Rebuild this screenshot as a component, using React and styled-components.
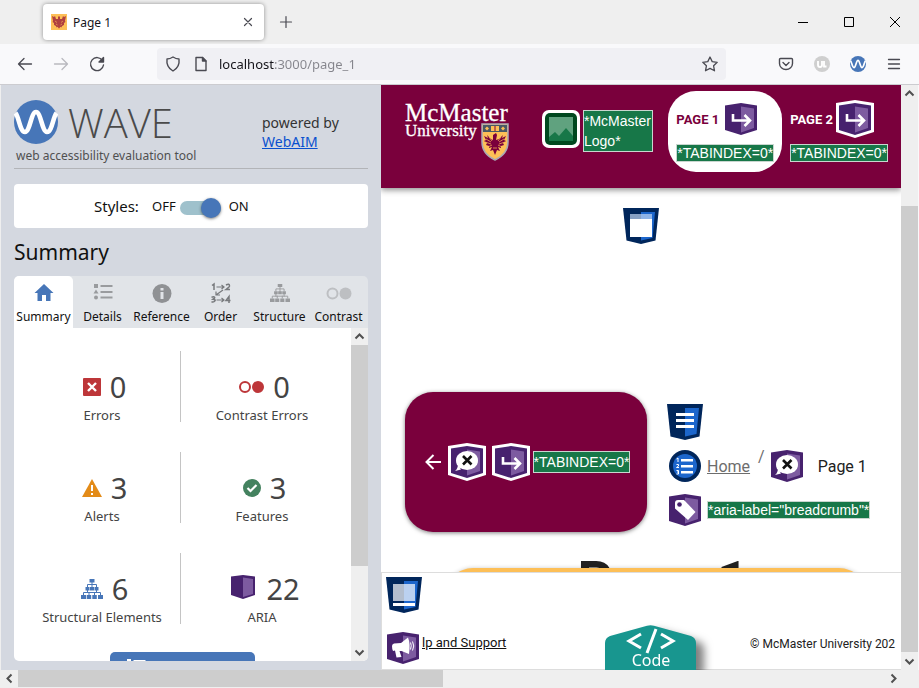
import React, { useState } from "react";
import styled, { createGlobalStyle } from "styled-components";

const GlobalStyle = createGlobalStyle`
  * { box-sizing: border-box; }
  body { margin: 0; background: #efefef; }
  button { border: 0; padding: 0; margin: 0; background: none; color: inherit; font: inherit; cursor: pointer; }
  svg { display: block; flex: none; overflow: visible; }
  h1, h2, p, dl, dd, dt, ol { margin: 0; padding: 0; }
`;

const UI = `"Noto Sans", "Open Sans", sans-serif`;
const MAROON = "#7a003c";

/* ---------- browser chrome ---------- */

const Window = styled.div`
  display: flex;
  flex-direction: column;
  height: 100vh;
  min-height: 480px;
  overflow: hidden;
  font-family: ${UI};
  color: #15141a;
`;

const TitleBar = styled.header`
  flex: none;
  display: flex;
  align-items: center;
  height: 44px;
  padding-left: 43px;
  background: #efefef;
`;

const BrowserTab = styled.div`
  display: flex;
  align-items: center;
  gap: 6px;
  width: 221px;
  height: 36px;
  padding: 0 8px;
  border-radius: 4px;
  background: #fff;
  box-shadow: 0 0 4px rgba(0, 0, 0, 0.4);
  font-size: 12px;
`;

const TabTitle = styled.span`
  flex: 1;
`;

const IconButton = styled.button`
  display: flex;
  align-items: center;
  justify-content: center;
  width: ${(p) => p.$w || 32}px;
  height: ${(p) => p.$h || 32}px;
  color: ${(p) => (p.$muted ? "#b9b9bf" : "#4a4a52")};
`;

const WindowControls = styled.div`
  display: flex;
  margin-left: auto;
  padding-right: 1px;
`;

const Toolbar = styled.nav`
  flex: none;
  display: flex;
  align-items: center;
  justify-content: space-between;
  gap: 44px;
  height: 41px;
  padding: 0 9px;
  background: #f9f9fb;
  border-bottom: 1px solid #ccccd0;
`;

const ButtonGroup = styled.div`
  display: flex;
  gap: 4px;
`;

const UrlBar = styled.div`
  flex: 1;
  display: flex;
  align-items: center;
  height: 32px;
  padding-left: 8px;
  border-radius: 4px;
  background: #f0f0f4;
  color: #4a4a52;
  gap: 12px;
`;

const UrlInput = styled.input`
  flex: 1;
  min-width: 0;
  margin-left: -2px;
  padding: 0;
  border: 0;
  outline: 0;
  font: 13px ${UI};
  color: transparent;
  background: linear-gradient(90deg, #15141a 56px, #85858c 56px);
  -webkit-background-clip: text;
  background-clip: text;
`;

/* ---------- shell ---------- */

const Shell = styled.div`
  flex: 1;
  min-height: 0;
  display: flex;
  border-right: 1px solid #f9f9fb;
`;

const Sidebar = styled.aside`
  flex: none;
  display: flex;
  flex-direction: column;
  width: 381px;
  padding: 0 13px 9px;
  border-left: 1px solid #efefef;
  background: #d4d8e0;
`;

const Frame = styled.div`
  position: relative;
  flex: 1;
  min-width: 0;
  display: flex;
  overflow: hidden;
`;

/* ---------- scroll bars ---------- */

const Scroll = styled.div`
  flex: none;
  display: flex;
  flex-direction: ${(p) => (p.$row ? "row" : "column")};
  ${(p) => (p.$row ? "height: 18px; padding: 0 17px 1px 1px;" : "width: 17px;")}
  background: #efefef;
`;

const ScrollArrow = styled.button`
  flex: none;
  display: flex;
  align-items: center;
  justify-content: center;
  width: 17px;
  height: 17px;
  color: #505050;
`;

const ScrollTrack = styled.div`
  flex: 1;
  display: flex;
  flex-direction: ${(p) => (p.$row ? "row" : "column")};
`;

const ScrollThumb = styled.div`
  flex: 0 0 ${(p) => p.$size}%;
  margin-top: ${(p) => p.$start || 0}px;
  background: #cdcdcd;
`;

/* ---------- WAVE side panel ---------- */

const Brand = styled.div`
  flex: none;
  display: flex;
  justify-content: space-between;
  height: 84px;
  padding-top: 15px;
  border-bottom: 1px solid #b2b4b8;
`;

const BrandLogo = styled.div`
  color: #505050;
`;

const BrandRow = styled.div`
  display: flex;
  align-items: center;
  gap: 10px;
  height: 44px;
`;

const BrandName = styled.span`
  padding-top: 2px;
  font: 300 40px/44px "Open Sans", "Noto Sans", sans-serif;
  color: #4a4a4a;
`;

const Tagline = styled.p`
  padding-left: 2px;
  font-size: 12px;
  line-height: 23px;
`;

const Powered = styled.p`
  width: 106px;
  padding-top: 13px;
  font-size: 14px;
  line-height: 19px;
  color: #333;
  a { display: block; width: max-content; color: #0a50cf; }
`;

const StylesBar = styled.label`
  flex: none;
  display: flex;
  align-items: center;
  height: 44px;
  margin-top: 15px;
  padding-left: 80px;
  border-radius: 4px;
  background: #fff;
  color: #111;
  font-size: 13px;
`;

const StylesName = styled.span`
  width: 58px;
  font-size: 15px;
`;

const Toggle = styled.input`
  appearance: none;
  display: flex;
  align-items: center;
  justify-content: ${(p) => (p.checked ? "flex-end" : "flex-start")};
  width: 41px;
  height: 14px;
  margin: 3px 8px 0 4px;
  border-radius: 7px;
  background: #9fc1cc;
  &::before {
    content: "";
    width: 20px;
    height: 20px;
    border-radius: 50%;
    background: #4776b8;
    box-shadow: 0 1px 3px rgba(0, 0, 0, 0.5);
  }
`;

const PanelTitle = styled.h1`
  flex: none;
  font-size: 21px;
  font-weight: 400;
  line-height: 48px;
  color: #111;
`;

const Tabs = styled.div`
  flex: none;
  display: flex;
  height: 52px;
  border-radius: 5px 5px 0 0;
  background: #e1e4e8;
`;

const TabButton = styled.button`
  flex: 1 1 0;
  min-width: 0;
  display: flex;
  flex-direction: column;
  align-items: center;
  gap: 5px;
  padding-top: 7px;
  border-radius: 5px 5px 0 0;
  background: ${(p) => (p["aria-selected"] ? "#fff" : "transparent")};
  font-size: 12px;
  line-height: 18px;
  white-space: nowrap;
  color: #111;
`;

const Panel = styled.section`
  flex: 1;
  min-height: 0;
  display: flex;
  overflow: hidden;
  border-radius: 0 0 5px 5px;
  background: #fff;
`;

const PanelBody = styled.div`
  flex: 1;
  overflow: hidden;
  padding: 23px 8px 0 10px;
`;

const Stats = styled.dl`
  display: grid;
  grid-template-columns: 157px 1fr;
  row-gap: 30px;
`;

const Stat = styled.div`
  display: flex;
  flex-direction: column-reverse;
  justify-content: flex-start;
  height: 71px;
  text-align: center;
  color: #444;
  border-right: ${(p) => (p.$ruled ? "1px solid #c4c4c4" : "0")};
`;

const StatValue = styled.dd`
  display: flex;
  align-items: center;
  justify-content: center;
  gap: 9px;
  padding: 15px 0 0 5px;
  font-size: 29px;
  line-height: 42px;
`;

const StatName = styled.dt`
  font-size: 13px;
  line-height: 14px;
`;

const DetailsButton = styled.button`
  display: flex;
  align-items: flex-start;
  gap: 10px;
  width: 145px;
  height: 34px;
  margin: 28px 0 0 86px;
  padding: 6px 16px;
  border-radius: 5px;
  background: #4776b8;
  color: #fff;
  font-size: 13px;
  line-height: 22px;
`;

/* ---------- inspected page ---------- */

const Page = styled.div`
  flex: 1;
  min-width: 0;
  display: flex;
  flex-direction: column;
  overflow: hidden;
  background: #fff;
  font-family: Roboto, "Liberation Sans", sans-serif;
`;

const SiteHeader = styled.header`
  position: relative;
  flex: none;
  display: flex;
  height: 103px;
  padding: 0 13px 0 24px;
  background: ${MAROON};
  box-shadow: 0 2px 6px rgba(0, 0, 0, 0.45);
`;

const LogoLink = styled.a`
  margin: 16px 32px 0 0;
`;

const LogoAlt = styled.div`
  display: flex;
  align-items: flex-start;
  gap: 3px;
  margin: 25px auto 0 0;
`;

const Note = styled.span`
  border: 1px solid #c9d6cf;
  background: #177748;
  color: #fff;
  font: 14px/${(p) => (p.$tall || p.$mid ? 20 : 16)}px "Liberation Sans", Arial, sans-serif;
  white-space: ${(p) => (p.$tall ? "normal" : "nowrap")};
  ${(p) => p.$tall && "width: 70px;"}
`;

const SiteNav = styled.nav`
  display: flex;
  padding-top: 6px;
`;

const NavItem = styled.a`
  display: flex;
  flex-direction: column;
  align-items: center;
  height: 81px;
  padding: 9px 8px 0;
  border-radius: 28px;
  background: ${(p) => (p.$current ? "#fff" : "transparent")};
  color: ${(p) => (p.$current ? MAROON : "#fff")};
  margin-right: ${(p) => (p.$current ? 0 : -8)}px;
  text-decoration: none;
  font-size: 13px;
  font-weight: 700;
`;

const NavLabel = styled.span`
  display: flex;
  align-items: center;
  gap: 3px;
  width: 100%;
  height: 38px;
  margin-bottom: 6px;
`;

const SiteMain = styled.main`
  flex: 1;
  min-height: 0;
  overflow: hidden;
  padding: 20px 24px 0;
`;

const MainMarker = styled.div`
  display: flex;
  justify-content: center;
  height: 184px;
`;

const Columns = styled.div`
  display: flex;
  gap: 20px;
`;

const BackCard = styled.a`
  flex: none;
  display: flex;
  align-items: center;
  justify-content: center;
  width: 242px;
  height: 140px;
  padding-left: 3px;
  border-radius: 28px;
  background: ${MAROON};
  box-shadow: 0 1px 4px rgba(0, 0, 0, 0.5);
  text-decoration: none;
`;

const MarkerGap = styled.span`
  display: flex;
  gap: ${(p) => p.$gap}px;
  margin: 0 3px 0 7px;
`;

const Crumbs = styled.nav`
  padding-top: 12px;
  font-size: 16px;
  color: #212121;
`;

const CrumbRow = styled.ol`
  display: flex;
  align-items: center;
  height: 32px;
  margin: 10px 0 12px 2px;
  list-style: none;
  li { display: flex; align-items: center; }
  a { margin-left: 6px; color: #6d6d6d; }
`;

const Slash = styled.li`
  margin: 0 6px 20px 8px;
  color: #6d6d6d;
`;

const CurrentCrumb = styled.span`
  margin-left: 15px;
`;

const LabelRow = styled.div`
  display: flex;
  align-items: center;
  gap: 6px;
  margin-left: 2px;
`;

const Headline = styled.h2`
  margin-top: 20px;
  height: 16px;
  padding-left: 44px;
  font-size: 55px;
  font-weight: 700;
  line-height: 60px;
  text-align: center;
  color: #212121;
`;

const GoldCard = styled.section`
  position: relative;
  height: 120px;
  margin: 0 10px 0 40px;
  border-radius: 28px;
  background: #fdbf57;
  box-shadow: 0 1px 5px rgba(0, 0, 0, 0.3);
`;

const SiteFooter = styled.footer`
  flex: none;
  display: flex;
  justify-content: space-between;
  height: 98px;
  padding: 4px 0 0 4px;
  border: 1px solid #ddd;
  border-right: 0;
  background: #fff;
  font-size: 13px;
  color: #212121;
  overflow: hidden;
`;

const Support = styled.div`
  padding-bottom: 5px;
  display: flex;
  flex-direction: column;
  justify-content: space-between;
  a { display: flex; padding-left: 1px; gap: 3px; color: #111; line-height: 22px; }
`;

const Copyright = styled.p`
  flex: none;
  width: 151px;
  padding-top: 59px;
  font-size: 12px;
  line-height: 16px;
  white-space: nowrap;
`;

const CodeTab = styled.button`
  position: absolute;
  bottom: 0;
  left: 50%;
  width: 91px;
  height: 45px;
  margin-left: -45px;
  color: #fff;
  font: 16px/18px ${UI};
  filter: drop-shadow(8px 6px 4px rgba(0, 0, 0, 0.5));
  svg { position: absolute; inset: 0; }
  span { position: relative; display: block; padding: 25px 0 0 2px; }
`;

/* ---------- drawings ---------- */

const Glyph = ({ size = 16, children, sw = 1, box = 16 }) => (
  <svg width={size} height={size} viewBox={`0 0 ${box} ${box}`} fill="none" stroke="currentColor" strokeWidth={sw} strokeLinecap="round" strokeLinejoin="round">
    {children}
  </svg>
);

const Arrow = ({ dir }) => (
  <svg width="11" height="11" viewBox="0 0 11 11" fill="none" stroke="currentColor" strokeWidth="2">
    <path d={{ up: "M1.5 7.5l4-4 4 4", down: "M1.5 3.5l4 4 4-4", left: "M7.5 1.5l-4 4 4 4", right: "M3.5 1.5l4 4-4 4" }[dir]} />
  </svg>
);

const WaveMark = ({ size }) => (
  <svg width={size} height={size} viewBox="0 0 44 44">
    <circle cx="22" cy="22" r="22" fill="#4776b8" />
    <path d="M1.500 13C5 17 6 32 11 32S17 12 22 12s6 20 11 20 6-15 9.500-19" fill="none" stroke="#fff" strokeWidth="4.600" />
  </svg>
);

const Favicon = () => (
  <svg width="16" height="16" viewBox="0 0 16 16">
    <path fill="#fdbf57" d="M0 0h16v16H0z" />
    <path fill="#b04040" d="M1 2l2 1 1-1 1 3 2 1V3l1-1 1 1v3l2-1 1-3 1 1 2-1-1 5 .5 1-1.500 1v2l-2 .5-.5 2L9 12l-1 3-1-3-1.500 1.500-.5-2L3 11V9L1.500 8 2 7z" />
    <path fill="#b04040" d="M3.500 5h9v6l-4.500 3-4.500-3z" />
    <path stroke="#fdbf57" strokeWidth=".6" d="M4 7l2 1.500M12 7l-2 1.500M5 10l1.500 1M11 10l-1.500 1" />
  </svg>
);

const StructureIcon = ({ color, size = 22 }) => (
  <svg width={size} height={size} viewBox="0 0 22 22" fill={color}>
    <path d="M8.500 1h5v3.500h-5zM4.500 9h4v3.500h-4zM9 9h4v3.500H9zM13.500 9h4v3.500h-4zM0 17h5v4H0zM5.700 17h4.500v4H5.700zM11.300 17h4.500v4h-4.500zM17 17h5v4h-5z" />
    <path fill="none" stroke={color} d="M11 4v6M6.500 9V6.500h9V9M2.500 17v-2.500h17V17M6.500 12v3M8 14v3M13.500 14v3M15.500 12v3" />
  </svg>
);

const tabIcons = {
  Summary: (
    <svg width="20" height="20" viewBox="0 0 20 20" fill="#4776b8">
      <path d="M10 1l9.500 9h-3v8h-4.500v-6H8v6H3.500v-8h-3z" />
    </svg>
  ),
  Details: (
    <svg width="20" height="20" viewBox="0 0 20 20" fill="#999b9e">
      <path d="M1 1h4v4H1zM3 6.500l2.500 4H.5z" />
      <circle cx="3" cy="14.500" r="2" />
      <path d="M7.500 2h12v2h-12zM7.500 8h12v2h-12zM7.500 13.500h12v2h-12z" />
    </svg>
  ),
  Reference: (
    <svg width="20" height="20" viewBox="0 0 20 20">
      <circle cx="10" cy="10.500" r="9.500" fill="#8f9194" />
      <path d="M8.500 5h3v2.500h-3zM8.500 9h3v7h-3z" fill="#e1e4e8" />
    </svg>
  ),
  Order: (
    <svg width="20" height="20" viewBox="0 0 20 20" fill="none" stroke="#77797c" strokeWidth="1.200">
      <path d="M5.500 4h7M10.500 2l2.500 2-2.500 2M12 7l-7 5M5 8.500V12h4M5.500 17h7M10.500 15l2.500 2-2.500 2" />
      <path strokeWidth="1.500" d="M1 2.500L3 1v6M15 2q3.500-2 3.500 1 0 1-3.500 3.500h4M.5 14.200q4-1 3 1l-1.500 1q4 .5 1 2.500-1 .5-2.500 0M18 20v-6.500l-3 4h4.500" />
    </svg>
  ),
  Structure: <StructureIcon color="#999b9e" size={20} />,
  Contrast: (
    <svg width="26" height="20" viewBox="0 0 26 20">
      <circle cx="6.500" cy="10.500" r="5" fill="none" stroke="#bdbfc2" strokeWidth="2" />
      <circle cx="19.500" cy="10.500" r="6" fill="#bdbfc2" />
    </svg>
  ),
};

const AriaShape = ({ outlined, size = 32, children }) => {
  const s = outlined ? 38 : size;
  return (
    <svg width={s} height={s} viewBox={outlined ? "-3 -3 38 38" : "0 0 32 32"}>
      {outlined && <path fill="#fff" d="M-3 0L16-3 35 0v29l-19 6-19-6z" />}
      <path fill="#47226e" d="M0 2.500L16 0l16 2.500V27l-16 5-16-5z" />
      <path fill="#7d5ba0" d="M16 3.500l13 2V25l-13 4.500z" />
      {children}
    </svg>
  );
};
const TabIndexIcon = (p) => (
  <AriaShape {...p}>
    <path d="M8 11v6.500h17M19.500 12l5.500 5.500-5.500 5.500" fill="none" stroke="#fff" strokeWidth="2.600" />
  </AriaShape>
);
const HiddenIcon = (p) => (
  <AriaShape {...p}>
    <ellipse cx="16" cy="14.500" rx="11" ry="9.500" fill="#fff" />
    <path d="M7 18l3 5.500-6 1.500q3-2.500 3-7z" fill="#fff" />
    <path d="M12 10l8.500 8.500M20.500 10L12 18.500" stroke="#111" strokeWidth="2.600" />
  </AriaShape>
);
const LabelIcon = () => (
  <AriaShape>
    <path d="M6 9q0-3 3-3h6l11.500 12-7.500 8L6 14.500z" fill="#fff" strokeLinejoin="round" />
    <circle cx="10.500" cy="10.500" r="2.300" fill="#47226e" />
  </AriaShape>
);
const AlertIcon = () => (
  <AriaShape>
    <path d="M5 14q0-2 2-2.500l7-.5 7-5.500q2.500 6 1 16.500l-7.500-3h-2l2 6-5 .5L8 18.500l-2 .5q-1-2-1-5z" fill="#fff" />
    <path d="M23.500 10.500q1.500 3 0 7M25.500 9.500q2.500 4.500 0 9" fill="none" stroke="#fff" />
  </AriaShape>
);

const HtmlShape = ({ children }) => (
  <svg width="36" height="36" viewBox="0 0 36 36">
    <path fill="#00265b" d="M0 0h36l-3.500 32.500L18 36 3.500 32.500z" />
    <path fill="#1c66cc" d="M18 4h14l-2.500 26L18 32.500z" />
    {children}
  </svg>
);

const StatIcon = {
  error: (
    <svg width="18" height="18" viewBox="0 0 18 18">
      <rect width="18" height="18" rx="1" fill="#bd3639" />
      <path d="M5 5l8 8M13 5l-8 8" stroke="#fff" strokeWidth="2.400" />
    </svg>
  ),
  contrast: (
    <svg width="25" height="18" viewBox="0 0 25 18">
      <circle cx="6" cy="9" r="5" fill="none" stroke="#bd3639" strokeWidth="2" />
      <circle cx="19" cy="9" r="6" fill="#bd3639" />
    </svg>
  ),
  alert: (
    <svg width="20" height="18" viewBox="0 0 20 18">
      <path d="M10 0l10 18H0z" fill="#e38b18" />
      <path d="M9 6h2v6H9zM9 14h2v2H9z" fill="#fff" />
    </svg>
  ),
  feature: (
    <svg width="18" height="18" viewBox="0 0 18 18">
      <circle cx="9" cy="9" r="9" fill="#44825f" />
      <path d="M4.500 9l3 3 6-6" stroke="#fff" strokeWidth="2.200" fill="none" />
    </svg>
  ),
  structure: <StructureIcon color="#4776b8" />,
  aria: (
    <svg width="28" height="28" viewBox="0 0 28 28">
      <path fill="#47226e" d="M2 1.500L14 0l12 1.500V20l-12 4-12-4z" />
      <path fill="#7d5ba0" d="M14 2.500L24 4v15l-10 3z" />
    </svg>
  ),
};

const McMasterLogo = () => (
  <svg width="105" height="60" viewBox="0 0 105 60" role="img" aria-label="McMaster University">
    <g fill="#fff" stroke="#fff" strokeWidth=".3" fontFamily="Liberation Serif, Times New Roman, serif">
      <text x="0" y="20" fontSize="25">McMaster</text>
      <text x="0" y="35" fontSize="17">University</text>
    </g>
    <path d="M77 23h26v18q0 12-13 18-13-6-13-18z" fill="#fdbf57" stroke="#a9a9b4" strokeWidth="1.500" />
    <path d="M78 24h24v7H78z" fill="#495965" />
    <path d="M86 25h8v5h-8zM82 25.500l2 2-2 2-2-2zM98 25.500l2 2-2 2-2-2z" fill="#fdbf57" />
    <path d="M90 25v5" stroke="#7a003c" />
    <path fill="#7a003c" d="M79 35l4 2-1-3 4 4 2 1v-5l3-2 1 2-1 5 3-1 4-4-1 3 4-2-2 4 2 1-3 2 1 2-3 1v2l-3-1 2 4-3-1-2 5-2-5-3 1 2-4-3 1v-2l-3-1 1-2-3-2 2-1z" />
    <path stroke="#fdbf57" strokeWidth=".7" d="M81 38l5 3M80 41l6 2M99 38l-5 3M100 41l-6 2M84 36l3 4M96 36l-3 4M88 47h4M87 44l-4 2M93 44l4 2" />
  </svg>
);

const ImageIcon = () => (
  <svg width="38" height="38" viewBox="0 0 38 38">
    <rect width="38" height="38" rx="7" fill="#fff" />
    <rect x="3" y="3" width="32" height="32" rx="5" fill="#00481f" />
    <path fill="#60a27f" d="M7 7h24v24H7z" />
    <path fill="#177748" d="M7 27l6-5 4 4 7-8 7 8v5H7z" />
  </svg>
);

/* ---------- data ---------- */

const stats = [
  ["Errors", 0, "error"],
  ["Contrast Errors", 0, "contrast"],
  ["Alerts", 3, "alert"],
  ["Features", 3, "feature"],
  ["Structural Elements", 6, "structure"],
  ["ARIA", 22, "aria"],
];

function ScrollBar({ row, size, start }) {
  return (
    <Scroll $row={row}>
      <ScrollArrow aria-label={row ? "Scroll left" : "Scroll up"}><Arrow dir={row ? "left" : "up"} /></ScrollArrow>
      <ScrollTrack $row={row}><ScrollThumb $size={size} $start={start} /></ScrollTrack>
      <ScrollArrow aria-label={row ? "Scroll right" : "Scroll down"}><Arrow dir={row ? "right" : "down"} /></ScrollArrow>
    </Scroll>
  );
}

function Chrome() {
  const [url, setUrl] = useState("localhost:3000/page_1");
  return (
    <>
      <TitleBar>
        <BrowserTab>
          <Favicon />
          <TabTitle>Page 1</TabTitle>
          <IconButton $w={16} aria-label="Close tab"><Glyph size={16} sw={1.2}><path d="M4.500 4.500l7 7M11.500 4.500l-7 7" /></Glyph></IconButton>
        </BrowserTab>
        <IconButton $w={44} aria-label="New tab"><Glyph sw={1.2}><path d="M8 2.500v11M2.500 8h11" /></Glyph></IconButton>
        <WindowControls>
          <IconButton $w={46} aria-label="Minimize"><svg width="10" height="10"><path d="M0 5h10v1H0z" fill="#000" /></svg></IconButton>
          <IconButton $w={46} aria-label="Maximize"><svg width="10" height="10"><path d="M.5.5h9v9h-9z" fill="none" stroke="#000" /></svg></IconButton>
          <IconButton $w={46} aria-label="Close"><svg width="10" height="10"><path d="M0 0l10 10M10 0L0 10" stroke="#000" /></svg></IconButton>
        </WindowControls>
      </TitleBar>
      <Toolbar>
        <ButtonGroup>
          <IconButton aria-label="Back"><Glyph sw={1.3}><path d="M1.500 8h13M7 2.500L1.500 8 7 13.500" /></Glyph></IconButton>
          <IconButton $muted aria-label="Forward"><Glyph sw={1.3}><path d="M14.500 8h-13M9 2.500L14.500 8 9 13.500" /></Glyph></IconButton>
          <IconButton aria-label="Reload"><Glyph sw={1.4}><path d="M13.500 4.500A6.500 6.500 0 1 0 14.500 9" /><path d="M14.500 1.500V6H10z" fill="currentColor" /></Glyph></IconButton>
        </ButtonGroup>
        <UrlBar>
          <Glyph sw={1.4}><path d="M8 1q3 2 6 2 1 8-6 12Q1 11 2 3q3 0 6-2z" /></Glyph>
          <Glyph sw={1.4}><path d="M3 1.500h6.500L13 5v9.500H3z" /><path d="M9.500 1.500V5H13z" fill="currentColor" /></Glyph>
          <UrlInput aria-label="Address" value={url} onChange={(e) => setUrl(e.target.value)} spellCheck={false} />
          <IconButton aria-label="Bookmark"><Glyph sw={1.3}><path d="M8 1l2.200 4.600 5 .7-3.600 3.500.9 5L8 12.400l-4.500 2.400.9-5L.8 6.300l5-.7z" /></Glyph></IconButton>
        </UrlBar>
        <ButtonGroup>
          <IconButton aria-label="Pocket"><Glyph sw={1.4}><path d="M2.500 2.500h11q1 0 1 1V7.500a6.500 6 0 0 1-13 0v-4q0-1 1-1zM5 6.500l3 3 3-3" /></Glyph></IconButton>
          <IconButton $muted aria-label="Extension"><svg width="16" height="16"><circle cx="8" cy="8" r="8" fill="#cfcfcf" /><path d="M4 5v4q0 2 2 2t2-2V5M10 5v5.500h2.500" fill="none" stroke="#fff" strokeWidth="1.800" /></svg></IconButton>
          <IconButton aria-label="WAVE"><WaveMark size={16} /></IconButton>
          <IconButton aria-label="Menu"><Glyph sw={1.3}><path d="M2.500 3.500h11M2.500 8h11M2.500 12.500h11" /></Glyph></IconButton>
        </ButtonGroup>
      </Toolbar>
    </>
  );
}

function WavePanel() {
  const [on, setOn] = useState(true);
  const [tab, setTab] = useState("Summary");
  return (
    <Sidebar>
      <Brand>
        <BrandLogo>
          <BrandRow><WaveMark size={44} /><BrandName>WAVE</BrandName></BrandRow>
          <Tagline>web accessibility evaluation tool</Tagline>
        </BrandLogo>
        <Powered>powered by <a href="#webaim">WebAIM</a></Powered>
      </Brand>
      <StylesBar>
        <StylesName>Styles:</StylesName>
        OFF
        <Toggle type="checkbox" role="switch" checked={on} onChange={() => setOn(!on)} />
        ON
      </StylesBar>
      <PanelTitle>Summary</PanelTitle>
      <Tabs role="tablist">
        {Object.keys(tabIcons).map((name) => (
          <TabButton key={name} role="tab" aria-selected={tab === name} onClick={() => setTab(name)}>
            {tabIcons[name]}
            {name}
          </TabButton>
        ))}
      </Tabs>
      <Panel>
        <PanelBody>
          <Stats>
            {stats.map(([name, value, icon], i) => (
              <Stat key={name} $ruled={i % 2 === 0}>
                <StatName>{name}</StatName>
                <StatValue>{StatIcon[icon]}{value}</StatValue>
              </Stat>
            ))}
          </Stats>
          <DetailsButton aria-label="View details">
            <svg width="20" height="20" viewBox="0 0 20 20" fill="#fff">
              <path d="M1 1h4v4H1zM3 6.500l2.500 4H.5zM7.500 2h12v2h-12zM7.500 8h12v2h-12zM7.500 13.500h12v2h-12zM1 12.500h4v4H1z" />
            </svg>
          </DetailsButton>
        </PanelBody>
        <ScrollBar size={74} />
      </Panel>
    </Sidebar>
  );
}

function InspectedPage() {
  return (
    <Frame>
      <Page>
        <SiteHeader>
          <LogoLink href="#home"><McMasterLogo /></LogoLink>
          <LogoAlt><ImageIcon /><Note $tall>*McMaster Logo*</Note></LogoAlt>
          <SiteNav>
            <NavItem href="#page_1" $current>
              <NavLabel>PAGE 1<TabIndexIcon outlined /></NavLabel>
              <Note>*TABINDEX=0*</Note>
            </NavItem>
            <NavItem href="#page_2">
              <NavLabel>PAGE 2<TabIndexIcon outlined /></NavLabel>
              <Note>*TABINDEX=0*</Note>
            </NavItem>
          </SiteNav>
        </SiteHeader>
        <SiteMain>
          <MainMarker>
            <HtmlShape>
              <path fill="#c0d5f2" d="M7 6h22v5H7z" opacity=".7" />
              <path fill="#fff" d="M7 11h22v18H7z" />
            </HtmlShape>
          </MainMarker>
          <Columns>
            <BackCard href="#back" aria-label="Back">
              <svg width="16" height="16" viewBox="0 0 16 16" fill="none" stroke="#fff" strokeWidth="2"><path d="M16 8H2M8.500 1L1.500 8l7 7" /></svg>
              <MarkerGap $gap={6}><HiddenIcon outlined /><TabIndexIcon outlined /></MarkerGap>
              <Note $mid>*TABINDEX=0*</Note>
            </BackCard>
            <Crumbs aria-label="breadcrumb">
              <HtmlShape><path fill="#fff" d="M9 9h18v3H9zM9 15h18v3H9zM9 21h18v3H9z" /></HtmlShape>
              <CrumbRow>
                <li>
                  <svg width="32" height="32" viewBox="0 0 32 32">
                    <circle cx="16" cy="16" r="16" fill="#00265b" />
                    <circle cx="16" cy="16" r="12" fill="#1c66cc" />
                    <path fill="#fff" d="M12 9h12v2.500H12zM12 15h12v2.500H12zM12 21h12v2.500H12z" />
                    <path d="M7.500 9l1.500-1v4M7.500 14.500h2v1.500l-2 1.500h2.500M7.500 20.500h2v3.500h-2M8 22h1.500" fill="none" stroke="#fff" />
                  </svg>
                  <a href="#home">Home</a>
                </li>
                <Slash aria-hidden="true">/</Slash>
                <li><HiddenIcon /><CurrentCrumb>Page 1</CurrentCrumb></li>
              </CrumbRow>
              <LabelRow><LabelIcon /><Note>*aria-label="breadcrumb"*</Note></LabelRow>
            </Crumbs>
          </Columns>
          <Headline>Page 1</Headline>
          <GoldCard />
        </SiteMain>
        <SiteFooter>
          <Support>
            <HtmlShape><path fill="#fff" opacity=".7" d="M7 7h22v17H7z" /><path fill="#fff" d="M7 26h22v3H7z" /></HtmlShape>
            <a href="#support"><AlertIcon />lp and Support</a>
          </Support>
          <Copyright>© McMaster University 202</Copyright>
        </SiteFooter>
      </Page>
      <ScrollBar size={81} start={104} />
      <CodeTab>
        <svg width="91" height="45" viewBox="0 0 91 45">
          <path fill="#18968f" d="M0 45V18q0-5 5-7L42 .8q3.500-1 7 0L86 11q5 2 5 7v27z" />
          <path fill="none" stroke="#fff" strokeWidth="3" d="M36 9l-12 7 12 7M56 9l12 7-12 7M51 4l-9 24" />
        </svg>
        <span>Code</span>
      </CodeTab>
    </Frame>
  );
}

export default function App() {
  return (
    <Window>
      <GlobalStyle />
      <Chrome />
      <Shell>
        <WavePanel />
        <InspectedPage />
      </Shell>
      <ScrollBar row size={49} />
    </Window>
  );
}
